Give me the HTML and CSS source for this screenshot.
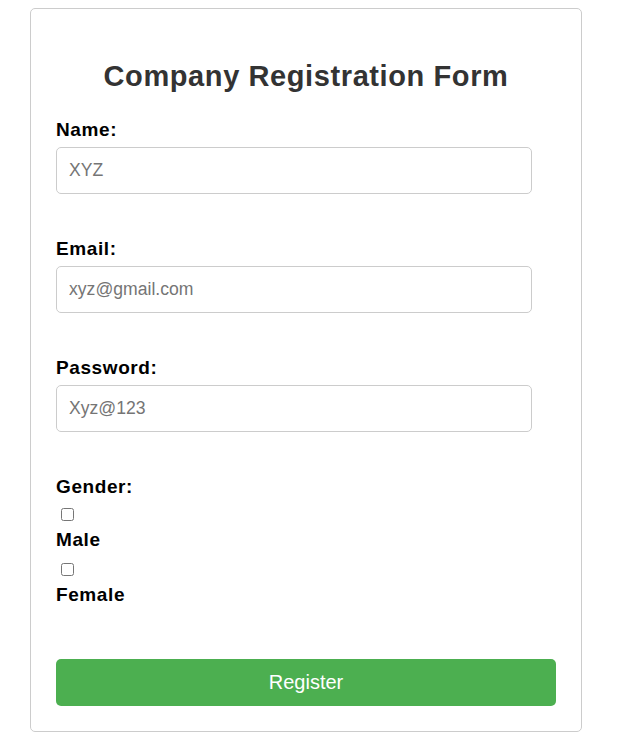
FILE: index.html
```html
<!DOCTYPE html>
<html lang="en">
<head>
    <meta charset="UTF-8">
    <meta name="viewport" content="width=device-width, initial-scale=1.0">
    <title>Company Registration Form</title>
    <link rel="stylesheet" href="styles.css">
</head>
<body>
    <div class="container">
        <h2>Company Registration Form</h2>
        <form>
            <label for="name">Name:</label>
            <input type="text" id="name" class="field" placeholder="XYZ">

            <label for="email">Email:</label>
            <input type="email" id="email" class="field" placeholder="xyz@gmail.com">

            <label for="password">Password:</label>
            <input type="password" id="password" class="field" placeholder="Xyz@123">

            <label>Gender:</label>
            <div class="gender">
                <input type="checkbox" id="male" class="check">
                <label for="male" class="option">Male</label>
                <input type="checkbox" id="female" class="check">
                <label for="female" class="option">Female</label>
            </div>

            <button type="submit" class="register">Register</button>
        </form>
    </div>
</body>
</html>
```

FILE: styles.css
```css
body {
    font-family: "Liberation Sans", Arial, sans-serif;
    margin: 0;
    background-color: white;
}
.container {
    width: 500px;
    margin: 8px 0 0 30px;
    padding: 25px;
    border: 1px solid #ccc;
    border-radius: 5px;
    background: white;
}
h2 {
    font-size: 29px;
    line-height: 32px;
    letter-spacing: 0.6px;
    color: #333;
    text-align: center;
    margin: 26px 0 27px;
}
label {
    display: block;
    font-size: 19px;
    line-height: 21px;
    letter-spacing: 0.6px;
    font-weight: bold;
    color: black;
    margin-bottom: 7px;
}
.field {
    display: block;
    width: 90%;
    padding: 12px;
    font-size: 17.6px;
    line-height: 21px;
    font-family: "Liberation Sans", Arial, sans-serif;
    border: 1px solid #ccc;
    border-radius: 5px;
    margin: 0 0 44px;
    outline: none;
}
.field::placeholder {
    color: #757575;
}
.gender {
    padding-top: 4px;
}
.check {
    display: block;
    width: 13px;
    height: 13px;
    margin: 0 0 8px 5px;
}
.option {
    margin-bottom: 13px;
}
.gender .option:last-child {
    margin-bottom: 0;
}
.register {
    display: block;
    width: 100%;
    margin-top: 54px;
    padding: 12px;
    font-size: 20px;
    line-height: 23px;
    font-family: "Liberation Sans", Arial, sans-serif;
    color: white;
    background-color: #4caf50;
    border: none;
    border-radius: 5px;
    cursor: pointer;
}
```
